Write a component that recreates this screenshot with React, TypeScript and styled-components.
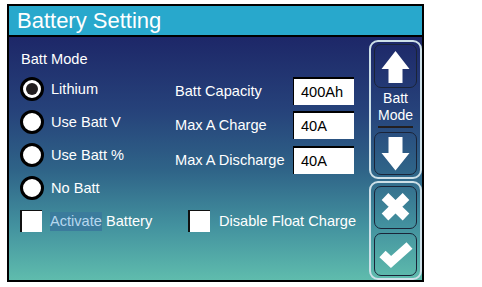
import React from 'react';
import styled, { createGlobalStyle } from 'styled-components';

const GlobalStyle = createGlobalStyle`
  html, body {
    margin: 0;
    padding: 0;
    background: #fff;
  }
  body {
    font-family: 'Liberation Sans', Arial, sans-serif;
  }
`;

const Frame = styled.div`
  margin: 4px 0 0 7px;
  width: 417px;
  height: 278px;
  box-sizing: border-box;
  border: 2px solid #000;
  display: flex;
  flex-direction: column;
`;

const Header = styled.div`
  height: 29px;
  flex: none;
  border-bottom: 2px solid #000;
  background: #28a8cc;
  color: #fff;
  font-size: 22px;
  line-height: 29px;
  padding-left: 8px;
`;

const Body = styled.div`
  flex: 1;
  display: flex;
  color: #fff;
  font-size: 14.6px;
  background: linear-gradient(
    to bottom,
    #1d2768 0%,
    #26427a 30%,
    #2f6488 55%,
    #43929f 78%,
    #5fbcad 100%
  );
`;

const Content = styled.div`
  flex: 1;
  display: flex;
  flex-direction: column;
  padding: 13px 0 0 11px;
`;

const Title = styled.div`
  line-height: 18px;
  padding-left: 1px;
`;

const Main = styled.div`
  display: flex;
  margin-top: 4px;
`;

const RadioList = styled.div`
  width: 155px;
  display: flex;
  flex-direction: column;
`;

const Row = styled.div<{ $gap?: number }>`
  height: 33px;
  display: flex;
  align-items: center;
  gap: ${p => (p.$gap === undefined ? 7 : p.$gap)}px;
`;

const Radio = styled.span<{ $on?: boolean }>`
  width: 24px;
  height: 24px;
  box-sizing: border-box;
  border: 3px solid #000;
  border-radius: 50%;
  background: #fff;
  display: flex;
  align-items: center;
  justify-content: center;
  &::after {
    content: '';
    display: ${p => (p.$on ? 'block' : 'none')};
    width: 12px;
    height: 12px;
    border-radius: 50%;
    background: #221e1f;
  }
`;

const Settings = styled.div`
  padding-top: 4.5px;
  display: flex;
  flex-direction: column;
  gap: 6.5px;
`;

const SettingRow = styled.div`
  height: 28px;
  display: flex;
  align-items: center;
`;

const SettingLabel = styled.span`
  width: 118px;
`;

const ValueBox = styled.div`
  width: 61px;
  height: 28px;
  box-sizing: border-box;
  border-top: 2px solid #000;
  border-left: 1px solid #000;
  background: #fff;
  color: #000;
  padding-left: 7px;
  display: flex;
  align-items: center;
`;

const CheckItem = styled.div<{ $w?: number }>`
  display: flex;
  align-items: center;
  gap: ${p => (p.$w ? 8 : 9)}px;
  width: ${p => (p.$w ? `${p.$w}px` : 'auto')};
`;

const CheckBox = styled.span`
  width: 22px;
  height: 22px;
  box-sizing: border-box;
  border-top: 1px solid #111;
  border-left: 2px solid #111;
  background: #fff;
`;

const Highlight = styled.span`
  background: #3b7b9c;
  color: #b6d7ee;
  padding: 1px 0 2px;
`;

const Panel = styled.div`
  width: 53px;
  flex: none;
  display: flex;
  flex-direction: column;
  gap: 2px;
  padding-top: 3px;
`;

const Group = styled.div<{ $pad: string; $gap?: number }>`
  border: 2px solid #cde0e8;
  border-radius: 9px;
  padding: ${p => p.$pad};
  display: flex;
  flex-direction: column;
  align-items: center;
  gap: ${p => p.$gap || 0}px;
`;

const Key = styled.div<{ $h: number }>`
  width: 43px;
  height: ${p => p.$h}px;
  box-sizing: border-box;
  border: 1px solid #1a2438;
  border-radius: 7px;
  display: flex;
  align-items: center;
  justify-content: center;
  svg {
    display: block;
  }
`;

const ModeLabel = styled.div`
  height: 44px;
  display: flex;
  flex-direction: column;
  align-items: center;
  justify-content: center;
  font-size: 14px;
  line-height: 17px;
`;

const Rule = styled.div`
  width: 35px;
  height: 2px;
  margin-top: 2px;
  margin-bottom: 2px;
  background: #231f20;
`;

const Icon: React.FC<{ h: number; children: React.ReactNode }> = ({ h, children }) => (
  <svg width={41} height={h - 2} viewBox={`1 1 41 ${h - 2}`}>
    {children}
  </svg>
);

const radios = [
  { label: 'Lithium', on: true },
  { label: 'Use Batt V' },
  { label: 'Use Batt %' },
  { label: 'No Batt' }
];

const settings = [
  { label: 'Batt Capacity', value: '400Ah' },
  { label: 'Max A Charge', value: '40A' },
  { label: 'Max A Discharge', value: '40A' }
];

export default function App() {
  return (
    <>
      <GlobalStyle />
      <Frame>
        <Header>Battery Setting</Header>
        <Body>
          <Content>
            <Title>Batt Mode</Title>
            <Main>
              <RadioList>
                {radios.map(r => (
                  <Row key={r.label}>
                    <Radio $on={r.on} />
                    <span>{r.label}</span>
                  </Row>
                ))}
              </RadioList>
              <Settings>
                {settings.map(s => (
                  <SettingRow key={s.label}>
                    <SettingLabel>{s.label}</SettingLabel>
                    <ValueBox>{s.value}</ValueBox>
                  </SettingRow>
                ))}
              </Settings>
            </Main>
            <Row $gap={0}>
              <CheckItem $w={168}>
                <CheckBox />
                <span>
                  <Highlight>Activate</Highlight> Battery
                </span>
              </CheckItem>
              <CheckItem>
                <CheckBox />
                <span>Disable Float Charge</span>
              </CheckItem>
            </Row>
          </Content>
          <Panel>
            <Group $pad="2px 3px">
              <Key $h={44}>
                <Icon h={44}>
                  <path d="M21.5 7 L35.5 25 L28.5 25 L28.5 39 L14.5 39 L14.5 25 L7.5 25 Z" fill="#fff" />
                </Icon>
              </Key>
              <ModeLabel>
                <span>Batt</span>
                <span>Mode</span>
                <Rule />
              </ModeLabel>
              <Key $h={43}>
                <Icon h={43}>
                  <path d="M14.5 5 L28.5 5 L28.5 21 L35.5 21 L21.5 38.5 L7.5 21 L14.5 21 Z" fill="#fff" />
                </Icon>
              </Key>
            </Group>
            <Group $pad="3px 3px 2px" $gap={4}>
              <Key $h={43}>
                <Icon h={43}>
                  <path d="M11 10.5 L32 31 M32 10.5 L11 31" stroke="#fff" strokeWidth={9.5} fill="none" />
                </Icon>
              </Key>
              <Key $h={43}>
                <Icon h={43}>
                  <polyline
                    points="8.5,21 17,29 35.5,12.5"
                    stroke="#fff"
                    strokeWidth={9}
                    strokeLinejoin="miter"
                    fill="none"
                  />
                </Icon>
              </Key>
            </Group>
          </Panel>
        </Body>
      </Frame>
    </>
  );
}
